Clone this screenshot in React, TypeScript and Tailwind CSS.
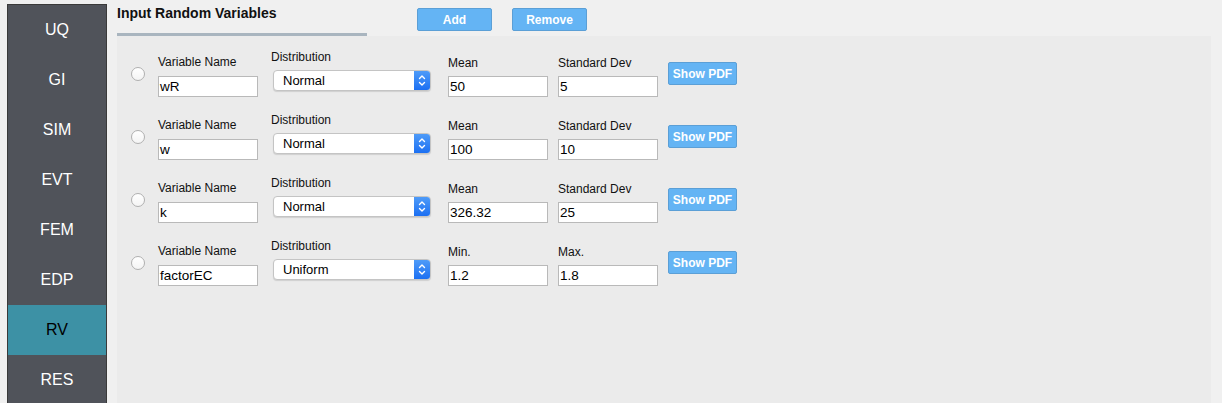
import React from "react";

const tabs = ["UQ", "GI", "SIM", "EVT", "FEM", "EDP", "RV", "RES"];

type Row = {
  name: string;
  dist: string;
  p1: [string, string];
  p2: [string, string];
};

const rows: Row[] = [
  { name: "wR", dist: "Normal", p1: ["Mean", "50"], p2: ["Standard Dev", "5"] },
  { name: "w", dist: "Normal", p1: ["Mean", "100"], p2: ["Standard Dev", "10"] },
  { name: "k", dist: "Normal", p1: ["Mean", "326.32"], p2: ["Standard Dev", "25"] },
  { name: "factorEC", dist: "Uniform", p1: ["Min.", "1.2"], p2: ["Max.", "1.8"] },
];

function TextBox({ value, w }: { value: string; w: string }) {
  return (
    <div className={`${w} h-[21px] bg-white border border-[#b9b9b9] px-[1px] text-[13.5px] leading-[20px] text-black`}>
      {value}
    </div>
  );
}

function Select({ value }: { value: string }) {
  return (
    <div className="w-[158px] h-[21px] flex bg-white rounded-[4px] border border-[#c4c4c4] shadow-[0_1px_1px_rgba(0,0,0,0.12)] overflow-hidden">
      <div className="flex-1 pl-[9px] text-[13px] leading-[19px] text-black">{value}</div>
      <div className="w-[16px] bg-gradient-to-b from-[#4e9bf8] to-[#1b6ff2] flex items-center justify-center">
        <svg width="8" height="13" viewBox="0 0 8 13" fill="none" stroke="white" strokeWidth="1.4" strokeLinecap="round" strokeLinejoin="round">
          <path d="M1.5 4.5 L4 2 L6.5 4.5" />
          <path d="M1.5 8.5 L4 11 L6.5 8.5" />
        </svg>
      </div>
    </div>
  );
}

function BlueButton({ label, w, h }: { label: string; w: string; h: string }) {
  return (
    <div className={`${w} ${h} bg-[#64b4f4] border border-[#5b9fd6] rounded-[2px] flex items-center justify-center text-white font-bold text-[12px]`}>
      {label}
    </div>
  );
}

function VarRow({ row }: { row: Row }) {
  return (
    <div className="h-[63px] flex items-start pl-[14px] text-[12px] leading-[14px] text-[#111]">
      <div className="mt-[22px] w-[14px] h-[14px] rounded-full bg-gradient-to-b from-white to-[#f4f4f4] border border-[#b0b0b0]" />
      <div className="ml-[13px] mt-[10px] flex flex-col gap-[7px]">
        <span>Variable Name</span>
        <TextBox value={row.name} w="w-[100px]" />
      </div>
      <div className="ml-[13px] mt-[5px] flex flex-col gap-[6px]">
        <span>Distribution</span>
        <div className="ml-[2px]">
          <Select value={row.dist} />
        </div>
      </div>
      <div className="ml-[17px] mt-[11px] flex flex-col gap-[6px]">
        <span>{row.p1[0]}</span>
        <TextBox value={row.p1[1]} w="w-[100px]" />
      </div>
      <div className="ml-[10px] mt-[11px] flex flex-col gap-[6px]">
        <span>{row.p2[0]}</span>
        <TextBox value={row.p2[1]} w="w-[100px]" />
      </div>
      <div className="ml-[10px] mt-[17px]">
        <BlueButton label="Show PDF" w="w-[69px]" h="h-[23px]" />
      </div>
    </div>
  );
}

export default function App() {
  return (
    <div className="w-[1222px] h-[403px] bg-[#f0f0f0] flex overflow-hidden" style={{ fontFamily: '"Liberation Sans", Arial, sans-serif' }}>
      <div className="ml-[7px] mt-[4px] w-[100px] flex flex-col bg-[#50535a] border border-[#3a3a3a] border-b-0">
        {tabs.map((t) => (
          <div
            key={t}
            className={`h-[50px] shrink-0 flex items-center justify-center text-[16px] ${
              t === "RV" ? "bg-[#3d91a5] text-black" : "text-white"
            }`}
          >
            {t}
          </div>
        ))}
      </div>

      <div className="ml-[10px] w-[1094px] flex flex-col">
        <div className="h-[36px] flex items-start">
          <div className="w-[250px] flex flex-col">
            <div className="mt-[5px] h-[16px] text-[14px] leading-[16px] font-bold text-[#111]">Input Random Variables</div>
            <div className="mt-[12px] h-[3px] bg-[#a9b5bf]" />
          </div>
          <div className="ml-[50px] mt-[8px] flex gap-[20px]">
            <BlueButton label="Add" w="w-[75px]" h="h-[23px]" />
            <BlueButton label="Remove" w="w-[75px]" h="h-[23px]" />
          </div>
        </div>
        <div className="flex-1 bg-[#ebebeb] pt-[9px]">
          {rows.map((r) => (
            <VarRow key={r.name} row={r} />
          ))}
        </div>
      </div>
    </div>
  );
}
